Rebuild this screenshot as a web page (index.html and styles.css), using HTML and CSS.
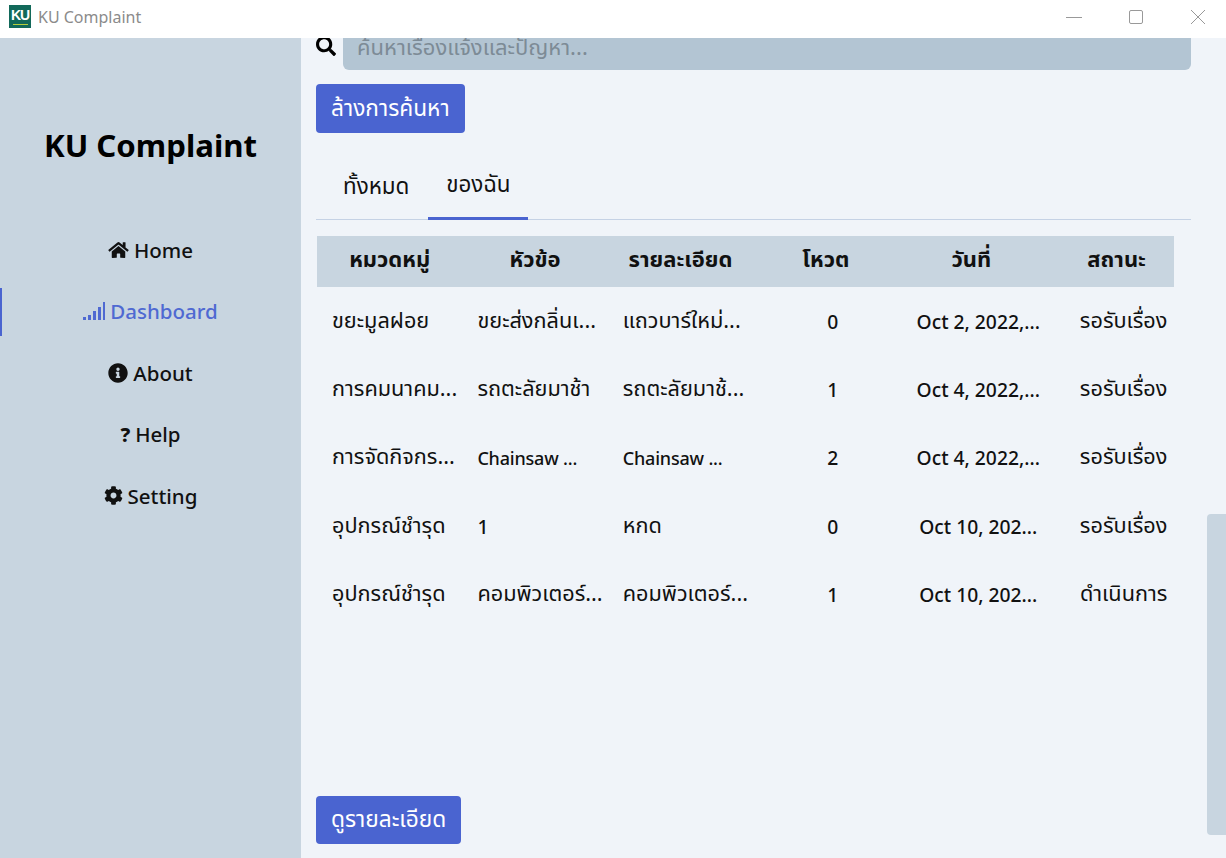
FILE: index.html
```html
<!DOCTYPE html>
<html lang="th">

<head>
    <meta charset="UTF-8">
    <title>KU Complaint</title>
    <link rel="stylesheet" href="styles.css">
</head>

<body>
    <div class="titlebar">
        <div class="logo"><span>KU</span></div>
        <span class="app-name">KU Complaint</span>
        <div class="win-btns">
            <svg width="16" height="16" viewBox="0 0 16 16"><path d="M0 8.5h16" stroke="#999" fill="none"/></svg>
            <svg width="16" height="16" viewBox="0 0 16 16"><rect x="1.5" y="1.5" width="13" height="13" rx="1.5" stroke="#999" fill="none"/></svg>
            <svg width="16" height="16" viewBox="0 0 16 16"><path d="M1 1l14 14M15 1L1 15" stroke="#999" fill="none"/></svg>
        </div>
    </div>

    <div class="app">
        <div class="sidebar">
            <h1 class="brand">KU Complaint</h1>
            <div class="nav">
                <a class="nav-item">
                    <svg class="ico" width="21" height="18" viewBox="0 0 576 512"><path d="M280.37 148.26L96 300.11V464a16 16 0 0 0 16 16l112.06-.29a16 16 0 0 0 15.92-16V368a16 16 0 0 1 16-16h64a16 16 0 0 1 16 16v95.64a16 16 0 0 0 16 16.05L464 480a16 16 0 0 0 16-16V300L295.67 148.26a12.19 12.19 0 0 0-15.3 0zM571.6 251.47L488 182.56V44.05a12 12 0 0 0-12-12h-56a12 12 0 0 0-12 12v72.61L318.47 43a48 48 0 0 0-61 0L4.34 251.47a12 12 0 0 0-1.6 16.9l25.5 31A12 12 0 0 0 45.15 301l235.22-193.74a12.19 12.19 0 0 1 15.3 0L530.9 301a12 12 0 0 0 16.9-1.6l25.5-31a12 12 0 0 0-1.7-16.93z"/></svg>
                    Home
                </a>
                <a class="nav-item active">
                    <svg class="ico" width="22" height="18" viewBox="0 0 22 18"><rect x="0" y="15" width="3" height="3"/><rect x="5" y="13" width="3" height="5"/><rect x="10" y="9" width="3" height="9"/><rect x="15" y="5" width="3" height="13"/><rect x="20" y="0" width="2" height="18"/></svg>
                    Dashboard
                </a>
                <a class="nav-item">
                    <svg class="ico" width="20" height="20" viewBox="0 0 512 512"><path d="M256 8C119.043 8 8 119.083 8 256c0 136.997 111.043 248 248 248s248-111.003 248-248C504 119.083 392.957 8 256 8zm0 110c23.196 0 42 18.804 42 42s-18.804 42-42 42-42-18.804-42-42 18.804-42 42-42zm56 254c0 6.627-5.373 12-12 12h-88c-6.627 0-12-5.373-12-12v-24c0-6.627 5.373-12 12-12h12v-64h-12c-6.627 0-12-5.373-12-12v-24c0-6.627 5.373-12 12-12h64c6.627 0 12 5.373 12 12v100h12c6.627 0 12 5.373 12 12v24z"/></svg>
                    About
                </a>
                <a class="nav-item"><b class="q">?</b> Help</a>
                <a class="nav-item">
                    <svg class="ico" width="19" height="19" viewBox="0 0 512 512"><path d="M487.4 315.7l-42.6-24.6c4.3-23.2 4.3-47 0-70.2l42.6-24.6c4.9-2.8 7.1-8.6 5.5-14-11.1-35.6-30-67.8-54.7-94.6-3.8-4.1-10-5.1-14.8-2.3L380.8 110c-17.9-15.4-38.5-27.3-60.8-35.1V25.8c0-5.6-3.9-10.5-9.4-11.7-36.7-8.2-74.3-7.8-109.2 0-5.5 1.2-9.4 6.1-9.4 11.7V75c-22.2 7.9-42.8 19.8-60.8 35.1L88.7 85.5c-4.9-2.8-11-1.9-14.8 2.3-24.7 26.7-43.6 58.9-54.7 94.6-1.7 5.4.6 11.2 5.5 14L67.3 221c-4.3 23.2-4.3 47 0 70.2l-42.6 24.6c-4.9 2.8-7.1 8.6-5.5 14 11.1 35.6 30 67.8 54.7 94.6 3.8 4.1 10 5.1 14.8 2.3l42.6-24.6c17.9 15.4 38.5 27.3 60.8 35.1v49.2c0 5.6 3.9 10.5 9.4 11.7 36.7 8.2 74.3 7.8 109.2 0 5.5-1.2 9.4-6.1 9.4-11.7v-49.2c22.2-7.9 42.8-19.8 60.8-35.1l42.6 24.6c4.9 2.8 11 1.9 14.8-2.3 24.7-26.7 43.6-58.9 54.7-94.6 1.5-5.5-.7-11.3-5.6-14.1zM256 336c-44.1 0-80-35.9-80-80s35.9-80 80-80 80 35.9 80 80-35.9 80-80 80z"/></svg>
                    Setting
                </a>
            </div>
        </div>

        <div class="main">
            <div class="content">
                <div class="search-row">
                    <svg width="20" height="20" viewBox="0 0 512 512"><path d="M505 442.7L405.3 343c-4.5-4.5-10.6-7-17-7H372c27.6-35.3 44-79.7 44-128C416 93.1 322.9 0 208 0S0 93.1 0 208s93.1 208 208 208c48.3 0 92.7-16.4 128-44v16.3c0 6.4 2.5 12.5 7 17l99.7 99.7c9.4 9.4 24.6 9.4 33.9 0l28.3-28.3c9.4-9.4 9.4-24.6.1-34zM208 336c-70.7 0-128-57.2-128-128 0-70.7 57.2-128 128-128 70.7 0 128 57.2 128 128 0 70.7-57.2 128-128 128z"/></svg>
                    <input class="search" type="text" placeholder="ค้นหาเรื่องแจ้งและปัญหา...">
                </div>
                <button class="btn btn-clear">ล้างการค้นหา</button>

                <div class="tabs">
                    <div class="tab">ทั้งหมด</div>
                    <div class="tab selected">ของฉัน</div>
                </div>

                <div class="tbl">
                    <div class="row head">
                        <div>หมวดหมู่</div><div>หัวข้อ</div><div>รายละเอียด</div><div>โหวต</div><div>วันที่</div><div>สถานะ</div>
                    </div>
                    <div class="row">
                        <div>ขยะมูลฝอย</div><div>ขยะส่งกลิ่นเ...</div><div>แถวบาร์ใหม่...</div><div class="mid en">0</div><div class="mid en">Oct 2, 2022,...</div><div class="mid">รอรับเรื่อง</div>
                    </div>
                    <div class="row">
                        <div>การคมนาคม...</div><div>รถตะลัยมาช้า</div><div>รถตะลัยมาช้...</div><div class="mid en">1</div><div class="mid en">Oct 4, 2022,...</div><div class="mid">รอรับเรื่อง</div>
                    </div>
                    <div class="row">
                        <div>การจัดกิจกร...</div><div class="en tight">Chainsaw ...</div><div class="en tight">Chainsaw ...</div><div class="mid en">2</div><div class="mid en">Oct 4, 2022,...</div><div class="mid">รอรับเรื่อง</div>
                    </div>
                    <div class="row">
                        <div>อุปกรณ์ชำรุด</div><div class="en">1</div><div>หกด</div><div class="mid en">0</div><div class="mid en">Oct 10, 202...</div><div class="mid">รอรับเรื่อง</div>
                    </div>
                    <div class="row">
                        <div>อุปกรณ์ชำรุด</div><div>คอมพิวเตอร์...</div><div>คอมพิวเตอร์...</div><div class="mid en">1</div><div class="mid en">Oct 10, 202...</div><div class="mid">ดำเนินการ</div>
                    </div>
                </div>

                <button class="btn btn-detail">ดูรายละเอียด</button>
            </div>
            <div class="scroll-track"><div class="scroll-thumb"></div></div>
        </div>
    </div>
</body>

</html>
```

FILE: styles.css
```css
*{
    box-sizing: border-box;
}
body{
    margin: 0;
    height: 858px;
    overflow: hidden;
    display: flex;
    flex-direction: column;
    font-family: "Noto Sans", "Noto Sans Thai", "Open Sans", sans-serif;
    color: #111;
    background-color: #f0f4f9;
}
.titlebar{
    height: 38px;
    flex: none;
    display: flex;
    align-items: center;
    padding: 0 20px 5px 9px;
    background-color: #fff;
}
.logo{
    width: 22px;
    height: 23px;
    background-color: #12695a;
    display: flex;
    flex-direction: column;
    align-items: center;
    color: #fff;
    font-family: "Liberation Sans", sans-serif;
    font-size: 14px;
    font-weight: bold;
    letter-spacing: -1px;
    line-height: 13px;
    padding-top: 4px;
}
.logo::after{
    content: "";
    width: 15px;
    height: 1px;
    margin-top: 2px;
    background-color: #b5cf3c;
}
.app-name{
    margin-left: 7px;
    font-size: 16px;
    color: #8b8b8b;
}
.win-btns{
    margin-left: auto;
    display: flex;
    gap: 46px;
}
.app{
    flex: 1;
    min-height: 0;
    display: flex;
}
.sidebar{
    width: 301px;
    flex: none;
    background-color: #c8d5e0;
}
.brand{
    margin: 87px 0 0;
    height: 40px;
    line-height: 40px;
    text-align: center;
    font-size: 31.2px;
    font-weight: 700;
    color: #000;
}
.nav{
    margin-top: 54px;
    display: flex;
    flex-direction: column;
}
.nav-item{
    height: 61.5px;
    display: flex;
    align-items: center;
    justify-content: center;
    gap: 5px;
    font-size: 20.5px;
    font-weight: 500;
    color: #111;
}
.nav-item .ico{
    fill: currentColor;
}
.nav-item.active{
    color: #4f69d2;
    position: relative;
}
.nav-item.active::before{
    content: "";
    position: absolute;
    left: 0;
    top: 7px;
    width: 2px;
    height: 48px;
    background-color: #4a64d0;
}
.q{
    font-weight: 800;
    font-size: 20px;
}
.main{
    flex: 1;
    min-width: 0;
    display: flex;
    overflow: hidden;
}
.content{
    width: 890px;
    flex: none;
    padding: 0 0 14px 15px;
    display: flex;
    flex-direction: column;
    align-items: flex-start;
}
.search-row{
    width: 100%;
    margin-top: -8px;
    display: flex;
    align-items: center;
    gap: 7px;
}
.search-row svg{
    flex: none;
    margin-top: -8px;
}
.search{
    flex: 1;
    height: 40px;
    padding: 0 14px 8px;
    border: 0;
    border-radius: 6px;
    background-color: #b3c5d3;
    font: inherit;
    font-size: 22px;
    outline: none;
}
.search::placeholder{
    color: #7d8b96;
}
.btn{
    border: 0;
    border-radius: 4px;
    background-color: #4a64d0;
    color: #fff;
    font-family: inherit;
    font-size: 22.7px;
    padding: 0 15px;
}
.btn-clear{
    margin-top: 14px;
    height: 49px;
}
.btn-detail{
    margin-top: auto;
    height: 48px;
}
.tabs{
    width: 100%;
    margin-top: 19px;
    height: 68px;
    display: flex;
    border-bottom: 1px solid #c5d2e5;
    font-size: 22.4px;
}
.tab{
    padding: 18px 27px 0;
}
.tab.selected{
    width: 100px;
    margin-left: -8px;
    padding: 16px 0 0;
    text-align: center;
    height: 68px;
    border-bottom: 3px solid #4a64d0;
}
.tbl{
    margin: 16px 0 0 1px;
    font-size: 21.7px;
}
.row{
    width: 857px;
    height: 68.4px;
    display: grid;
    grid-template-columns: repeat(6, 145.4px);
    align-items: center;
}
.row > div{
    padding-left: 15px;
    white-space: nowrap;
}
.row > .mid{
    padding-left: 14px;
    text-align: center;
}
.row > .en{
    font-size: 19.3px;
    font-weight: 500;
}
.row > .tight{
    font-size: 18px;
    letter-spacing: -0.2px;
}
.row.head{
    height: 51px;
    padding-bottom: 4px;
    background-color: #c8d5e0;
    font-size: 22px;
    font-weight: 700;
}
.row.head > div{
    padding-left: 0;
    text-align: center;
}
.scroll-track{
    margin-left: auto;
    width: 19px;
    flex: none;
}
.scroll-thumb{
    margin-top: 476px;
    height: 321px;
    border-radius: 4px 0 0 4px;
    background-color: #c8d5e0;
}
```
